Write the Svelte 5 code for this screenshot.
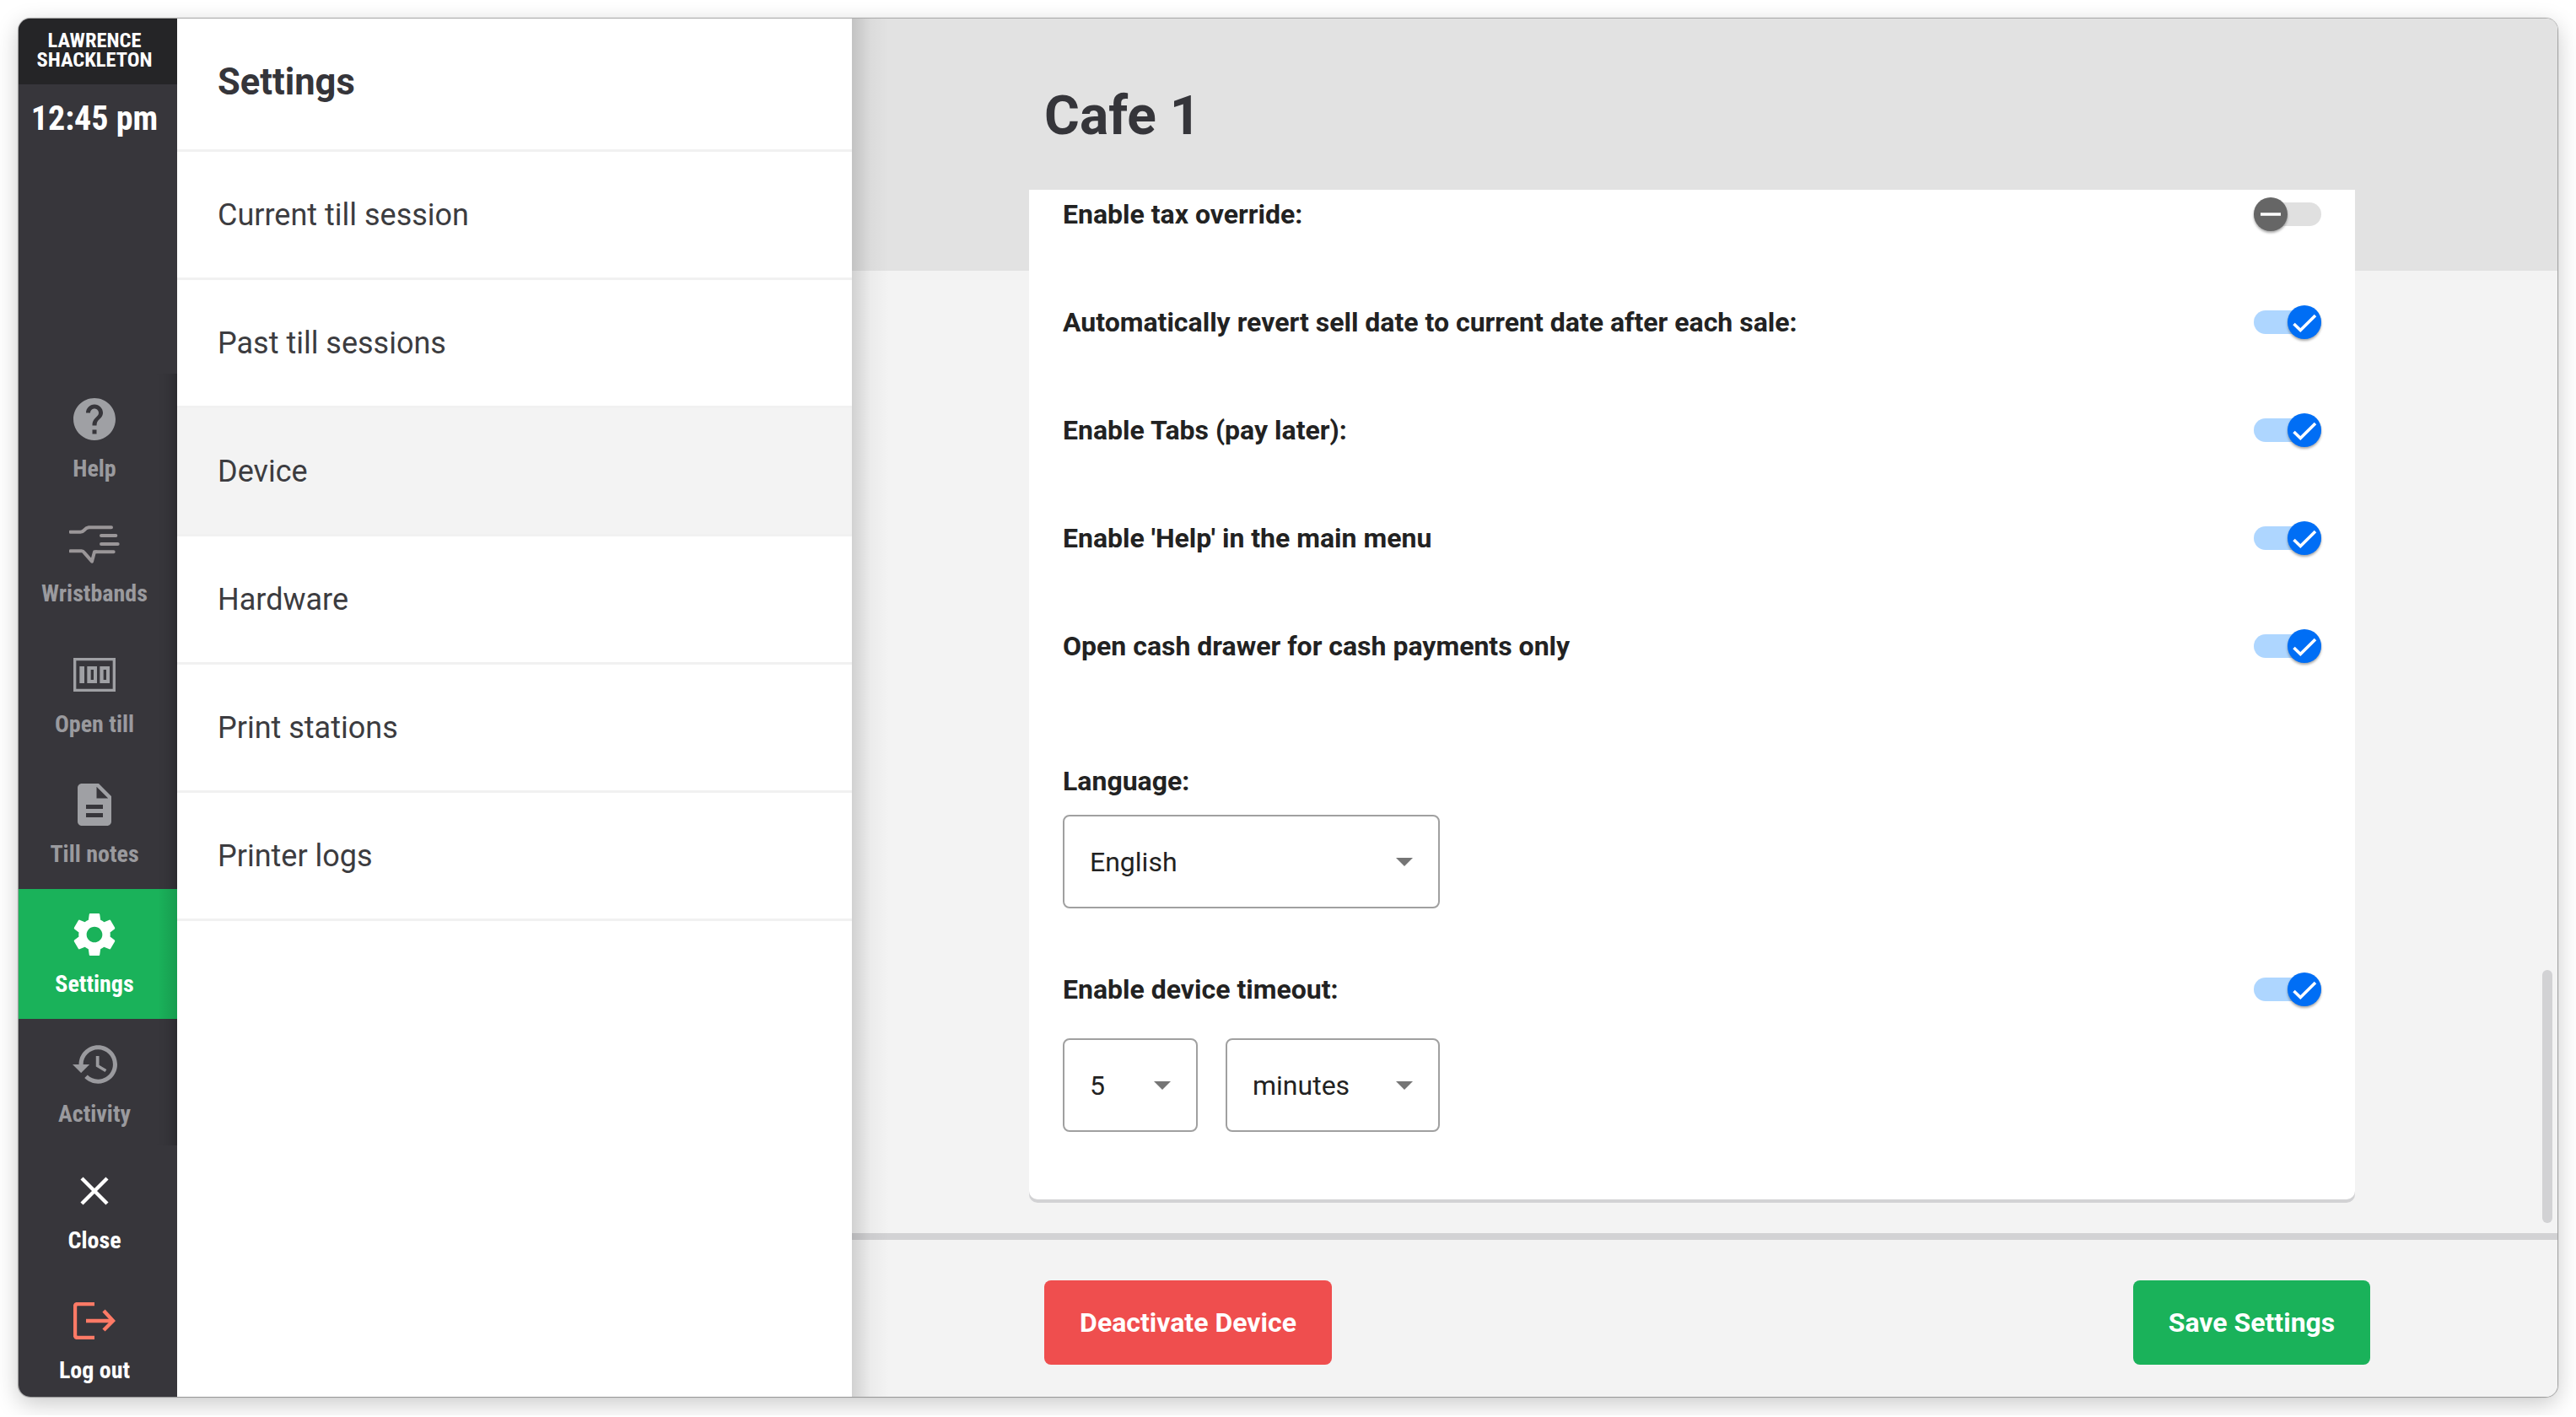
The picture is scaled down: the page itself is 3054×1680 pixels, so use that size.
<script lang="ts">
	const navItems = [
		{ id: 'help', label: 'Help', height: 148 },
		{ id: 'wristbands', label: 'Wristbands', height: 155 },
		{ id: 'till', label: 'Open till', height: 154 },
		{ id: 'notes', label: 'Till notes', height: 154 },
		{ id: 'settings', label: 'Settings', height: 154, active: true },
		{ id: 'activity', label: 'Activity', height: 150 },
	];

	const menu = ['Current till session', 'Past till sessions', 'Device', 'Hardware', 'Print stations', 'Printer logs'];

	const toggles = [
		{ label: 'Enable tax override:', on: false },
		{ label: 'Automatically revert sell date to current date after each sale:', on: true },
		{ label: 'Enable Tabs (pay later):', on: true },
		{ label: "Enable 'Help' in the main menu", on: true },
		{ label: 'Open cash drawer for cash payments only', on: true },
	];
</script>

{#snippet toggle(on: boolean)}
	<div class="toggle" class:on>
		<div class="knob">
			<svg viewBox="0 0 40 40" width="40" height="40">
				{#if on}
					<polyline points="7.5,22 15.3,29.5 33,12" fill="none" stroke="#fff" stroke-width="3.6" />
				{:else}
					<line x1="8" y1="20" x2="32" y2="20" stroke="#fff" stroke-width="3.6" />
				{/if}
			</svg>
		</div>
	</div>
{/snippet}

{#snippet select(value: string, cls: string)}
	<div class="select {cls}">
		<span>{value}</span>
		<i class="caret"></i>
	</div>
{/snippet}

<div class="window">
	<aside class="sidebar">
		<div class="user">LAWRENCE<br />SHACKLETON</div>
		<div class="time">12:45 pm</div>
		<nav class="nav">
			{#each navItems as item}
				<div class="nav-item" class:active={item.active} style="height: {item.height}px">
					<div class="nav-icon">
						{#if item.id === 'help'}
							<svg viewBox="2 2 20 20" width="50" height="50"><path fill="#9fa0a4" d="M12 2C6.48 2 2 6.48 2 12s4.48 10 10 10 10-4.48 10-10S17.52 2 12 2zm1 17h-2v-2h2v2zm2.07-7.75l-.9.92C13.45 12.9 13 13.5 13 15h-2v-.5c0-1.1.45-2.1 1.17-2.83l1.24-1.26c.37-.36.59-.86.59-1.41 0-1.1-.9-2-2-2s-2 .9-2 2H8c0-2.21 1.79-4 4-4s4 1.79 4 4c0 .88-.36 1.68-.93 2.25z" /></svg>
						{:else if item.id === 'wristbands'}
							<svg viewBox="248 66 180 138" width="60" height="46">
								<g fill="none" stroke="#9a9698" stroke-width="12" stroke-linecap="round" stroke-linejoin="round">
									<path d="M252 92H288Q296 92 302 85T318 76H398" />
									<path d="M362 105H414M362 135H421M344 163H406" />
									<path d="M252 160H292Q298 160 302 166L329 197L338 163H344" />
								</g>
							</svg>
						{:else if item.id === 'till'}
							<svg viewBox="0 0 150 120" width="50" height="40">
								<path fill="#9fa0a4" fill-rule="evenodd" d="M0 0H150V120H0ZM10 10V110H140V10Z" />
								<path fill="#9fa0a4" fill-rule="evenodd" d="M22 30H39V90H22ZM49 30H84V90H49ZM62 42V78H72V42ZM94 30H129V90H94ZM107 42V78H117V42Z" />
							</svg>
						{:else if item.id === 'notes'}
							<svg viewBox="4 2 16 20" width="40" height="50"><path fill="#9fa0a4" d="M14 2H6c-1.1 0-1.99.9-1.99 2L4 20c0 1.1.89 2 1.99 2H18c1.1 0 2-.9 2-2V8l-6-6zm2 16H8v-2h8v2zm0-4H8v-2h8v2zm-3-5V3.5L18.5 9H13z" /></svg>
						{:else if item.id === 'settings'}
							<svg viewBox="2.5 2 19 20" width="50" height="52"><path fill="#fff" d="M19.14 12.94c.04-.3.06-.61.06-.94 0-.32-.02-.64-.07-.94l2.03-1.58c.18-.14.23-.41.12-.61l-1.92-3.32c-.12-.22-.37-.29-.59-.22l-2.39.96c-.5-.38-1.03-.7-1.62-.94l-.36-2.54c-.04-.24-.24-.41-.48-.41h-3.84c-.24 0-.43.17-.47.41l-.36 2.54c-.59.24-1.13.57-1.62.94l-2.39-.96c-.22-.08-.47 0-.59.22L2.74 8.87c-.12.21-.08.47.12.61l2.03 1.58c-.05.3-.09.63-.09.94s.02.64.07.94l-2.03 1.58c-.18.14-.23.41-.12.61l1.92 3.32c.12.22.37.29.59.22l2.39-.96c.5.38 1.03.7 1.62.94l.36 2.54c.05.24.24.41.48.41h3.84c.24 0 .44-.17.47-.41l.36-2.54c.59-.24 1.13-.56 1.62-.94l2.39.96c.22.08.47 0 .59-.22l1.92-3.32c.12-.22.07-.47-.12-.61l-2.01-1.58zM12 15.6c-1.98 0-3.6-1.62-3.6-3.6s1.62-3.6 3.6-3.6 3.6 1.62 3.6 3.6-1.62 3.6-3.6 3.6z" /></svg>
						{:else}
							<svg viewBox="1 3 21 18" width="53" height="46"><path fill="#9a9a9e" d="M13 3c-4.97 0-9 4.03-9 9H1l3.89 3.89.07.14L9 12H6c0-3.87 3.13-7 7-7s7 3.13 7 7-3.13 7-7 7c-1.93 0-3.68-.79-4.94-2.06l-1.42 1.42C8.27 19.99 10.51 21 13 21c4.97 0 9-4.03 9-9s-4.03-9-9-9zm-1 5v5l4.28 2.54.72-1.21-3.5-2.08V8H12z" /></svg>
						{/if}
					</div>
					<div class="nav-label">{item.label}</div>
				</div>
			{/each}
		</nav>
		<div class="nav-item plain close">
			<div class="nav-icon">
				<svg viewBox="0 0 36 36" width="36" height="36"><path d="M3 3L33 33M33 3L3 33" stroke="#fff" stroke-width="4.4" fill="none" /></svg>
			</div>
			<div class="nav-label">Close</div>
		</div>
		<div class="nav-item plain logout">
			<div class="nav-icon">
				<svg viewBox="0 0 50 44" width="50" height="44">
					<g fill="none" stroke="#ff7a66" stroke-width="4.4">
						<path d="M25 2H5Q2 2 2 5V39Q2 42 5 42H25" />
						<path d="M15 22H46" />
						<path d="M36 10L47 22L36 33" />
					</g>
				</svg>
			</div>
			<div class="nav-label">Log out</div>
		</div>
	</aside>

	<section class="panel">
		<h2 class="panel-title">Settings</h2>
		{#each menu as entry}
			<div class="menu-row" class:current={entry === 'Device'}>{entry}</div>
		{/each}
	</section>

	<main class="main">
		<div class="content">
			<h1 class="page-title">Cafe 1</h1>
			<div class="card">
				<div class="rows">
					{#each toggles as row}
						<div class="row">
							<span class="label">{row.label}</span>
							{@render toggle(row.on)}
						</div>
					{/each}
				</div>
				<div class="label language">Language:</div>
				{@render select('English', 'wide')}
				<div class="row timeout">
					<span class="label">Enable device timeout:</span>
					{@render toggle(true)}
				</div>
				<div class="selects">
					{@render select('5', 'small')}
					{@render select('minutes', 'unit')}
				</div>
			</div>
			<div class="scrollbar"></div>
		</div>
		<footer class="footer">
			<button class="btn red">Deactivate Device</button>
			<button class="btn green">Save Settings</button>
		</footer>
	</main>
</div>

<style>
	:global(body) {
		margin: 0;
		background: #fff;
		font-family: Roboto, 'Liberation Sans', sans-serif;
	}

	.window {
		box-sizing: border-box;
		margin: 22px;
		width: 3010px;
		height: 1634px;
		display: flex;
		border-radius: 14px;
		overflow: hidden;
		box-shadow: 0 0 1px 1px rgba(0, 0, 0, 0.32), 0 8px 28px rgba(0, 0, 0, 0.22);
	}

	.sidebar {
		flex: 0 0 188px;
		display: flex;
		flex-direction: column;
		background: #37363b;
		position: relative;
		z-index: 1;
	}

	.user {
		height: 78px;
		box-sizing: border-box;
		padding: 14px 8px 0 0;
		background: #252527;
		color: #fff;
		font-size: 24.5px;
		font-stretch: 75%;
		font-weight: 700;
		line-height: 23px;
		text-align: center;
	}

	.time {
		height: 343px;
		box-sizing: border-box;
		padding: 18px 8px 0 0;
		color: #fff;
		font-size: 40px;
		font-stretch: 75%;
		line-height: 45px;
		font-weight: 700;
		text-align: center;
	}

	.nav {
		box-shadow: inset -22px 0 20px -22px rgba(0, 0, 0, 0.4);
	}

	.nav-item {
		display: flex;
		flex-direction: column;
		align-items: center;
		color: #9a9a9e;
		box-sizing: border-box;
		padding-right: 8px;
	}

	.nav-item.active {
		background: #1ab25a;
		color: #fff;
		background-image: linear-gradient(to right, transparent 88%, rgba(0, 0, 0, 0.12));
	}

	.nav-item.plain {
		color: #fff;
	}

	.close {
		height: 154px;
	}

	.logout {
		height: 144px;
	}

	.nav-icon {
		height: 50px;
		margin-top: 29px;
		display: flex;
		align-items: center;
		justify-content: center;
	}

	.nav-label {
		margin-top: 19px;
		font-size: 28px;
		font-stretch: 75%;
		line-height: 30px;
		font-weight: 700;
		white-space: nowrap;
	}

	.panel {
		flex: 0 0 800px;
		background: #fff;
		position: relative;
	}

	.panel-title {
		margin: 0;
		height: 158px;
		box-sizing: border-box;
		padding: 0 0 4px 48px;
		border-bottom: 3px solid #f1f1f1;
		display: flex;
		align-items: center;
		font-size: 43.5px;
		font-weight: 700;
		color: #35353a;
	}

	.menu-row {
		height: 152px;
		box-sizing: border-box;
		padding-left: 48px;
		border-bottom: 3px solid #f1f1f1;
		display: flex;
		align-items: center;
		font-size: 36px;
		color: #3c3c40;
	}

	.menu-row.current {
		background: #f3f3f3;
	}

	.main {
		flex: 1;
		display: flex;
		flex-direction: column;
		min-width: 0;
		background: #f3f3f3;
		position: relative;
	}

	.main::after {
		content: '';
		position: absolute;
		left: 0;
		top: 0;
		bottom: 0;
		width: 44px;
		background: linear-gradient(to right, rgba(0, 0, 0, 0.14), rgba(0, 0, 0, 0.03) 50%, transparent);
		pointer-events: none;
	}

	.content {
		flex: 1;
		position: relative;
		padding-left: 210px;
		background: linear-gradient(#e2e2e2 299px, #f3f3f3 299px);
		border-bottom: 8px solid #d2d2d4;
		min-height: 0;
	}

	.page-title {
		margin: 0;
		height: 203px;
		box-sizing: border-box;
		padding: 28px 0 0 18px;
		display: flex;
		align-items: center;
		font-size: 64px;
		font-weight: 700;
		color: #35353a;
	}

	.card {
		width: 1572px;
		height: 1197px;
		box-sizing: border-box;
		padding: 0 40px;
		background: #fff;
		border-radius: 0 0 10px 10px;
		box-shadow: 0 4px 0 #d2d2d4;
	}

	.rows {
		display: flex;
		flex-direction: column;
		gap: 70px;
	}

	.row {
		height: 58px;
		display: flex;
		align-items: center;
		justify-content: space-between;
	}

	.label {
		font-size: 32px;
		font-weight: 700;
		color: #222;
	}

	.language {
		margin-top: 102px;
		line-height: 58px;
		height: 58px;
	}

	.timeout {
		margin-top: 67px;
	}

	.selects {
		display: flex;
		gap: 33px;
		margin-top: 29px;
	}

	.select {
		height: 111px;
		box-sizing: border-box;
		border: 2px solid #a0a0a0;
		border-radius: 8px;
		display: flex;
		align-items: center;
		justify-content: space-between;
		padding: 0 30px 0 30px;
		font-size: 32px;
		color: #222;
		background: #fff;
	}

	.select.wide {
		width: 447px;
		margin-top: 11px;
	}

	.select.small {
		width: 160px;
	}

	.select.unit {
		width: 254px;
	}

	.caret {
		width: 0;
		height: 0;
		border-left: 10px solid transparent;
		border-right: 10px solid transparent;
		border-top: 10px solid #757575;
	}

	.toggle {
		width: 80px;
		height: 28px;
		border-radius: 14px;
		background: #e0e0e0;
		display: flex;
		align-items: center;
		justify-content: flex-start;
	}

	.toggle.on {
		background: #aed6ff;
		justify-content: flex-end;
	}

	.knob {
		width: 40px;
		height: 40px;
		border-radius: 50%;
		background: #666;
		box-shadow: 0 2px 3px rgba(0, 0, 0, 0.35);
	}

	.knob svg {
		display: block;
	}

	.toggle.on .knob {
		background: #006ef5;
	}

	.scrollbar {
		position: absolute;
		top: 1128px;
		right: 6px;
		width: 12px;
		height: 300px;
		border-radius: 6px;
		background: #d2d2d4;
	}

	.footer {
		height: 186px;
		box-sizing: border-box;
		padding: 48px 222px 0 228px;
		display: flex;
		justify-content: space-between;
		align-items: flex-start;
		flex: none;
	}

	.btn {
		height: 100px;
		border: none;
		border-radius: 8px;
		color: #fff;
		font-family: inherit;
		font-size: 32px;
		font-weight: 700;
		padding: 0;
	}

	.red {
		width: 341px;
		background: #ef4e4e;
	}

	.green {
		width: 281px;
		background: #1ab25a;
	}
</style>
